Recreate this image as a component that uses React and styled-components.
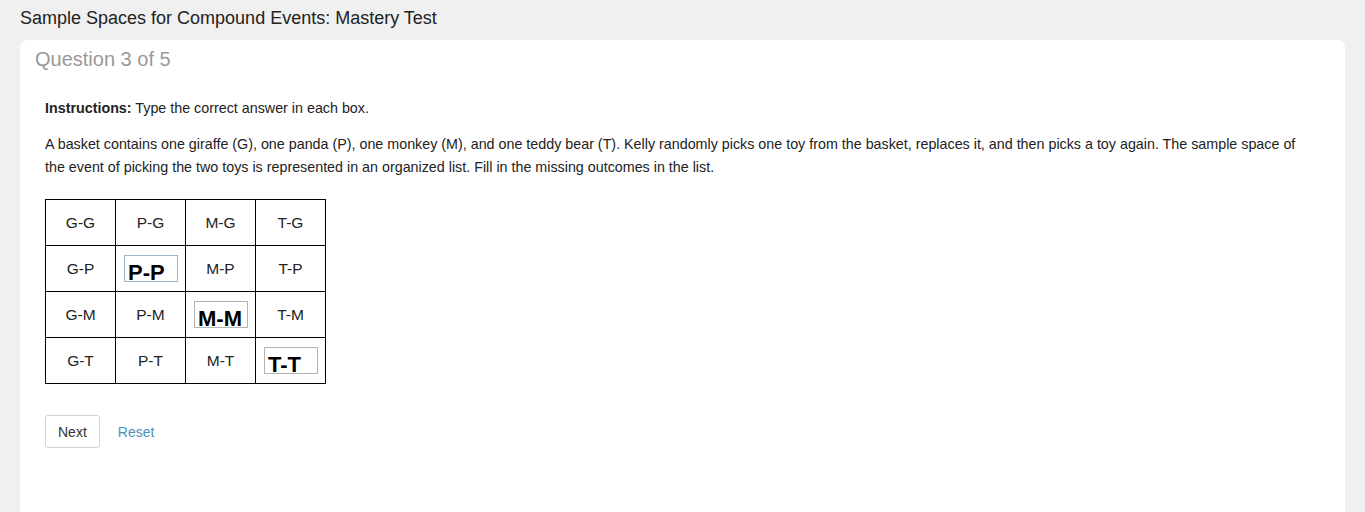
import React from "react";
import styled, { createGlobalStyle } from "styled-components";

const Global = createGlobalStyle`
  html, body { margin: 0; padding: 0; background: #f0f0f0; }
  body { font-family: "Liberation Sans", Arial, sans-serif; color: #333; }
`;

const Page = styled.div`
  display: flex;
  flex-direction: column;
  min-height: 512px;
`;

const Title = styled.h1`
  margin: 0;
  padding: 8px 20px 0;
  height: 32px;
  font-size: 18px;
  font-weight: normal;
  line-height: 20px;
  color: #222;
`;

const Card = styled.div`
  margin: 0 20px;
  background: #fff;
  border-radius: 8px 8px 0 0;
  padding: 8px 15px 40px;
  flex: 1;
`;

const QuestionHeading = styled.h2`
  margin: 0;
  font-size: 20px;
  line-height: 22px;
  font-weight: normal;
  color: #999;
`;

const Body = styled.div`
  padding: 0 20px 0 10px;
`;

const Text = styled.p`
  margin: ${(p) => p.$mt}px 0 0;
  font-size: 14.3px;
  line-height: 23px;
  color: #222;
`;

const Grid = styled.table`
  margin-top: 20px;
  border-collapse: collapse;
  font-size: 15.5px;
`;

const Cell = styled.td`
  width: 69px;
  height: 45px;
  padding: 0;
  border: 1px solid #000;
  text-align: ${(p) => (p.$input ? "left" : "center")};
  vertical-align: middle;
  color: #222;
`;

const Answer = styled.div`
  margin-left: 8px;
  box-sizing: border-box;
  width: 54px;
  height: 27px;
  padding: 6px 0 0 3px;
  border: 1px solid ${(p) => (p.$focus ? "#9fb3cf" : "#b4b4b4")};
  overflow: hidden;
  font-size: 22px;
  font-weight: bold;
  line-height: 22px;
  color: #000;
  white-space: nowrap;
`;

const Actions = styled.div`
  display: flex;
  align-items: center;
  gap: 18px;
  margin-top: 31px;
`;

const Button = styled.button`
  height: 33px;
  padding: 0 12px;
  background: #fff;
  border: 1px solid #d4d4d4;
  border-radius: 3px;
  font-family: inherit;
  font-size: 14px;
  color: #333;
`;

const Link = styled.a`
  font-size: 14px;
  color: #4d91b8;
  text-decoration: none;
`;

const rows = [
  ["G-G", "P-G", "M-G", "T-G"],
  ["G-P", { v: "P-P", focus: true }, "M-P", "T-P"],
  ["G-M", "P-M", { v: "M-M" }, "T-M"],
  ["G-T", "P-T", "M-T", { v: "T-T" }],
];

export default function App() {
  return (
    <Page>
      <Global />
      <Title>Sample Spaces for Compound Events: Mastery Test</Title>
      <Card>
        <QuestionHeading>Question 3 of 5</QuestionHeading>
        <Body>
          <Text $mt={27}>
            <b>Instructions:</b> Type the correct answer in each box.
          </Text>
          <Text $mt={13}>
            A basket contains one giraffe (G), one panda (P), one monkey (M), and one teddy bear (T). Kelly randomly picks one toy from the basket, replaces it, and then picks a toy again. The sample space of the event of picking the two toys is represented in an organized list. Fill in the missing outcomes in the list.
          </Text>
          <Grid>
            <tbody>
              {rows.map((r, i) => (
                <tr key={i}>
                  {r.map((c, j) =>
                    typeof c === "string" ? (
                      <Cell key={j}>{c}</Cell>
                    ) : (
                      <Cell key={j} $input>
                        <Answer $focus={c.focus}>{c.v}</Answer>
                      </Cell>
                    )
                  )}
                </tr>
              ))}
            </tbody>
          </Grid>
          <Actions>
            <Button>Next</Button>
            <Link href="#">Reset</Link>
          </Actions>
        </Body>
      </Card>
    </Page>
  );
}
